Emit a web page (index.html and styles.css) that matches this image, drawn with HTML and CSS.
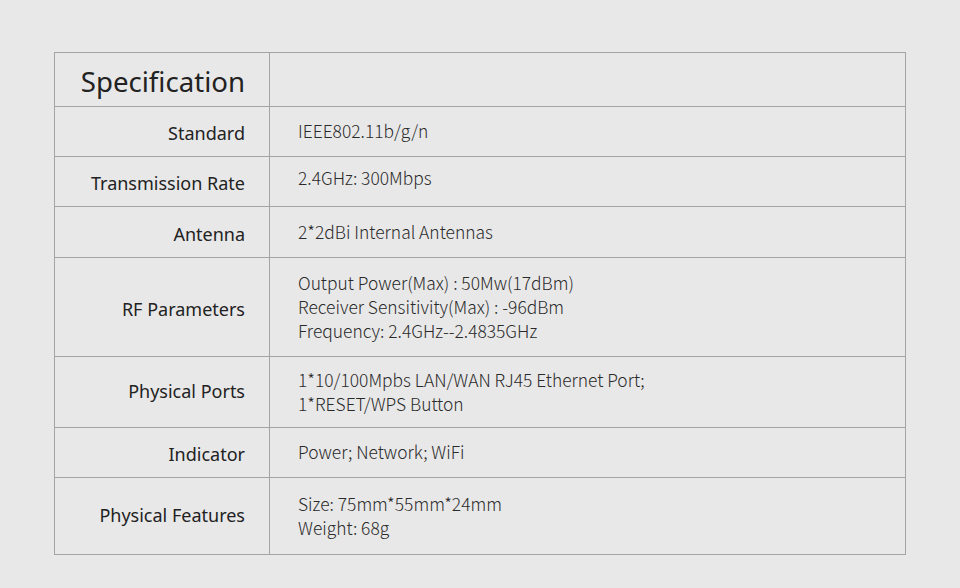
FILE: index.html
```html
<!DOCTYPE html>
<html>
<head>
<meta charset="utf-8">
<link rel="stylesheet" href="styles.css">
</head>
<body>
<div class="spec">
  <div class="cell label title">Specification</div>
  <div class="cell value"></div>

  <div class="cell label">Standard</div>
  <div class="cell value">IEEE802.11b/g/n</div>

  <div class="cell label">Transmission Rate</div>
  <div class="cell value raise">2.4GHz: 300Mbps</div>

  <div class="cell label">Antenna</div>
  <div class="cell value">2*2dBi Internal Antennas</div>

  <div class="cell label">RF Parameters</div>
  <div class="cell value">Output Power(Max) : 50Mw(17dBm)<br>Receiver Sensitivity(Max) : -96dBm<br>Frequency: 2.4GHz--2.4835GHz</div>

  <div class="cell label lower">Physical Ports</div>
  <div class="cell value">1*10/100Mpbs LAN/WAN RJ45 Ethernet Port;<br>1*RESET/WPS Button</div>

  <div class="cell label">Indicator</div>
  <div class="cell value">Power; Network; WiFi</div>

  <div class="cell label lower">Physical Features</div>
  <div class="cell value">Size: 75mm*55mm*24mm<br>Weight: 68g</div>
</div>
</body>
</html>
```
FILE: styles.css
```css
html, body {
  margin: 0;
  padding: 0;
  background: #e8e8e8;
}
body {
  width: 960px;
  height: 588px;
  overflow: hidden;
}
.spec {
  margin: 52px 0 0 54px;
  width: 852px;
  box-sizing: border-box;
  border-left: 1px solid #a4a4a4;
  border-top: 1px solid #a4a4a4;
  display: grid;
  grid-template-columns: 215px 636px;
  grid-template-rows: 54px 50px 50px 51px 99px 71px 50px 77px;
}
.cell {
  box-sizing: border-box;
  border-right: 1px solid #a4a4a4;
  border-bottom: 1px solid #a4a4a4;
  display: flex;
  align-items: center;
}
.label {
  justify-content: flex-end;
  padding: 3px 24px 0 0;
  font-family: "Noto Sans", sans-serif;
  font-size: 18px;
  color: #222;
}
.label.lower {
  padding-top: 0;
  padding-bottom: 2px;
}
.title {
  font-size: 27.6px;
  padding-top: 2px;
}
.value {
  padding: 0 0 1px 28px;
  font-family: "Noto Sans CJK JP", "Noto Sans", sans-serif;
  font-weight: 300;
  font-size: 17.4px;
  line-height: 24px;
  color: #2a2a2a;
}
.value.raise {
  padding-bottom: 8px;
}
```
